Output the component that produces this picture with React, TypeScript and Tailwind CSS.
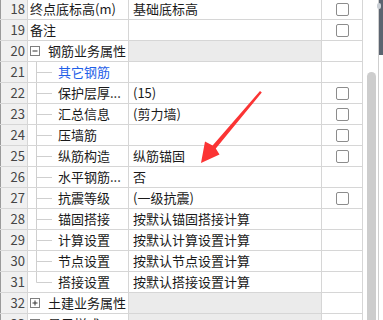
type Row = {
  no: number;
  name: string;
  value?: string;
  check?: boolean;
  kind: 'plain' | 'group' | 'child' | 'last';
  open?: boolean;
  blue?: boolean;
};

const rows: Row[] = [
  { no: 18, name: '终点底标高(m)', value: '基础底标高', check: true, kind: 'plain' },
  { no: 19, name: '备注', check: true, kind: 'plain' },
  { no: 20, name: '钢筋业务属性', kind: 'group', open: true },
  { no: 21, name: '其它钢筋', kind: 'child', blue: true },
  { no: 22, name: '保护层厚...', value: '(15)', check: true, kind: 'child' },
  { no: 23, name: '汇总信息', value: '(剪力墙)', check: true, kind: 'child' },
  { no: 24, name: '压墙筋', check: true, kind: 'child' },
  { no: 25, name: '纵筋构造', value: '纵筋锚固', check: true, kind: 'child' },
  { no: 26, name: '水平钢筋...', value: '否', kind: 'child' },
  { no: 27, name: '抗震等级', value: '(一级抗震)', check: true, kind: 'child' },
  { no: 28, name: '锚固搭接', value: '按默认锚固搭接计算', kind: 'child' },
  { no: 29, name: '计算设置', value: '按默认计算设置计算', kind: 'child' },
  { no: 30, name: '节点设置', value: '按默认节点设置计算', kind: 'child' },
  { no: 31, name: '搭接设置', value: '按默认搭接设置计算', kind: 'last' },
  { no: 32, name: '土建业务属性', kind: 'group', open: false },
  { no: 33, name: '显示样式', kind: 'group', open: false },
];

function TreeBox({ open }: { open?: boolean }) {
  return (
    <svg width="10" height="10" viewBox="0 0 10 10" className="shrink-0">
      <rect x="0.5" y="0.5" width="9" height="9" fill="white" stroke="#7f7f7f" />
      <line x1="2.5" y1="5" x2="7.5" y2="5" stroke="#333" />
      {!open && <line x1="5" y1="2.5" x2="5" y2="7.5" stroke="#333" />}
    </svg>
  );
}

function TreeLine({ last }: { last?: boolean }) {
  return (
    <svg width="30" height="20" viewBox="0 0 30 20" className="shrink-0">
      <line x1="8.5" y1="0" x2="8.5" y2={last ? 10.5 : 20} stroke="#cfcfcf" />
      <line x1="8.5" y1="10.5" x2="24" y2="10.5" stroke="#cfcfcf" />
    </svg>
  );
}

function Check() {
  return <div className="w-[13px] h-[13px] rounded-[2px] border border-[#8c8c8c] bg-white" />;
}

function GridRow({ row }: { row: Row }) {
  const group = row.kind === 'group';
  return (
    <div className="flex h-[21px] border-b border-[#d6d6d6]">
      <div className="w-[28px] shrink-0 border-l border-l-[#9a9a9a] border-r border-r-[#d6d6d6] bg-[#f0f0f0] text-[#454545] text-right pr-[2px]">
        {row.no}
      </div>
      <div className="w-[101px] shrink-0 border-r border-[#d6d6d6] flex items-center whitespace-nowrap overflow-hidden">
        {row.kind === 'plain' && <span className="pl-[2px]">{row.name}</span>}
        {group && (
          <div className="flex items-center pl-[2px] relative">
            <TreeBox open={row.open} />
            <span className="pl-[8px]">{row.name}</span>
          </div>
        )}
        {(row.kind === 'child' || row.kind === 'last') && (
          <>
            <TreeLine last={row.kind === 'last'} />
            <span className={row.blue ? 'text-[#1f5fe8]' : ''}>{row.name}</span>
          </>
        )}
      </div>
      <div
        className={`w-[193px] shrink-0 border-r border-[#d6d6d6] pl-[4px] whitespace-nowrap overflow-hidden ${
          group ? 'bg-[#ebebeb]' : 'bg-white'
        }`}
      >
        {row.value}
      </div>
      <div className="w-[41px] shrink-0 border-r border-[#d6d6d6] flex items-center justify-center">
        {row.check && <Check />}
      </div>
    </div>
  );
}

export default function App() {
  return (
    <div
      className="relative w-[383px] h-[320px] overflow-hidden bg-white text-[13px] leading-[20px] text-[#1a1a1a]"
      style={{ fontFamily: '"Noto Sans CJK SC", "Noto Sans", sans-serif' }}
    >
      <div className="flex h-full">
        <div className="w-[363px] shrink-0 -mt-px">
          {rows.map((r) => (
            <GridRow key={r.no} row={r} />
          ))}
        </div>

        {/* scrollbar */}
        <div className="w-[20px] shrink-0 flex h-full">
          <div className="w-[4px]" />
          <div className="w-[9px] flex flex-col">
            <div className="h-[72px]" />
            <div className="flex-1 bg-[#cdcdcd] rounded-t-full" />
          </div>
          <div className="w-[2px]" />
          <div className="w-px bg-[#cfcfcf]" />
          <div className="w-[4px] flex flex-col">
            <div className="h-[55px] bg-[#5b6470] relative">
              <div className="absolute left-[-2px] top-[3px] w-[4px] h-[6px] rounded-full bg-[#c9ced4]" />
            </div>
          </div>
        </div>
      </div>

      {/* annotation arrow */}
      <svg className="absolute inset-0 pointer-events-none" width="383" height="320" viewBox="0 0 383 320">
        <polygon
          points="260,91 261.8,92.6 215.8,148.6 219.5,154.5 201,163 205,141.5 212.6,145.6"
          fill="#fb3434"
        />
      </svg>
    </div>
  );
}
